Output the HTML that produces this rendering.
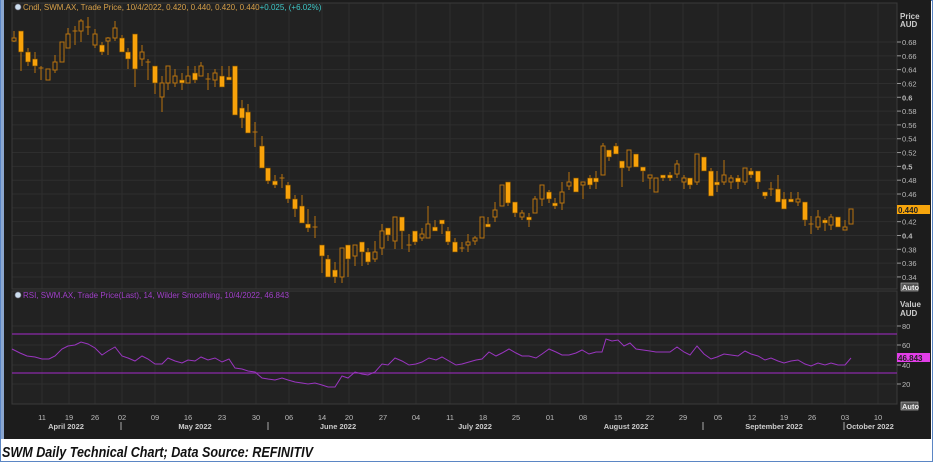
<!DOCTYPE html>
<html><head><meta charset="utf-8"><style>
html,body{margin:0;padding:0;background:#fff;}
body{width:933px;height:462px;overflow:hidden;position:relative;}
svg{position:absolute;left:0;top:0;}
text{font-family:"Liberation Sans",sans-serif;}
</style></head><body>
<svg id="s" width="933" height="462" viewBox="0 0 933 462" xmlns="http://www.w3.org/2000/svg">
<rect x="0" y="0" width="933" height="462" fill="#fff"/>
<rect x="0.5" y="0.5" width="932" height="461" fill="none" stroke="#5b86c4" stroke-width="1"/>
<rect x="1" y="0" width="3" height="439" fill="#8aa6cf"/>
<rect x="4" y="0" width="927" height="439" fill="#1c1c1c"/>
<rect x="12" y="3" width="885" height="286" fill="#222"/>
<rect x="12" y="291" width="885" height="113" fill="#222"/>
<g id="grid"></g>
<rect x="12" y="3" width="885" height="286" fill="none" stroke="#3a3a3a"/>
<rect x="12" y="291" width="885" height="113" fill="none" stroke="#3a3a3a"/>
<g id="c"></g>
<line x1="12" y1="334" x2="897" y2="334" stroke="#8a2aa8" stroke-width="1.3"/>
<line x1="12" y1="373" x2="897" y2="373" stroke="#8a2aa8" stroke-width="1.3"/>
<polyline id="rsi" fill="none" stroke="#9a35c0" stroke-width="1"/>
<g id="ax" font-size="7.5" fill="#bbb"></g>
<circle cx="18" cy="7" r="3" fill="#cde" stroke="#778" stroke-width="0.6"/>
<text x="23" y="10" font-size="8" fill="#d6a04a">Cndl, SWM.AX, Trade Price,  10/4/2022, 0.420, 0.440, 0.420, 0.440<tspan fill="#3fc9c9">+0.025, (+6.02%)</tspan></text>
<circle cx="18" cy="295" r="3" fill="#cde" stroke="#778" stroke-width="0.6"/>
<text x="23" y="298" font-size="8" fill="#a040c8">RSI, SWM.AX, Trade Price(Last),  14, Wilder Smoothing,  10/4/2022, 46.843</text>
<text x="900" y="19" font-size="8" fill="#ccc" font-weight="bold">Price</text>
<text x="900" y="27" font-size="8" fill="#ccc" font-weight="bold">AUD</text>
<text x="900" y="307" font-size="8" fill="#ccc" font-weight="bold">Value</text>
<text x="900" y="316" font-size="8" fill="#ccc" font-weight="bold">AUD</text>
<rect x="897" y="205" width="33" height="9" fill="#f7a50c"/>
<text x="898" y="213" font-size="8" fill="#222" font-weight="bold">0.440</text>
<rect x="897" y="353" width="33" height="9" fill="#e23ee8"/>
<text x="898" y="361" font-size="8" fill="#222" font-weight="bold">46.843</text>
<rect x="901" y="283" width="17" height="8" fill="#555" stroke="#bbb" stroke-width="0.6"/>
<text x="902" y="290" font-size="7.5" fill="#eee" font-weight="bold">Auto</text>
<rect x="901" y="402" width="17" height="8" fill="#555" stroke="#bbb" stroke-width="0.6"/>
<text x="902" y="409" font-size="7.5" fill="#eee" font-weight="bold">Auto</text>
<text x="2" y="457" font-size="14.5" font-weight="bold" font-style="italic" fill="#111" textLength="311" lengthAdjust="spacingAndGlyphs">SWM Daily Technical Chart; Data Source: REFINITIV</text>
</svg>
<script>
var NS="http://www.w3.org/2000/svg";
function el(p,t,a,txt){var e=document.createElementNS(NS,t);for(var k in a)e.setAttribute(k,a[k]);if(txt!=null)e.textContent=txt;p.appendChild(e);return e;}
var g=document.getElementById('grid'),ax=document.getElementById('ax'),c=document.getElementById('c');
function py(p){return 42+(0.68-p)/0.02*13.82;}
for(var i=0;i<=17;i++){var p=0.68-0.02*i,y=py(p);
 el(g,'line',{x1:12,x2:897,y1:y,y2:y,stroke:'#2e2e2e'});
 el(ax,'line',{x1:897,x2:901,y1:y,y2:y,stroke:'#999'});
 var s=p.toFixed(2);if(Math.abs(p-0.6)<1e-6)s='0.6';if(Math.abs(p-0.5)<1e-6)s='0.5';if(Math.abs(p-0.4)<1e-6)s='0.4';
 el(ax,'text',{x:902,y:y+3,'font-weight':(s.length==3?'bold':'normal')},s);}
[[80,326],[60,345],[40,365],[20,384]].forEach(function(v){el(g,'line',{x1:12,x2:897,y1:v[1],y2:v[1],stroke:'#2e2e2e'});
 el(ax,'line',{x1:897,x2:901,y1:v[1],y2:v[1],stroke:'#999'});el(ax,'text',{x:902,y:v[1]+3},v[0]);});
var ticks=[[42,'11'],[69,'19'],[95,'26'],[122,'02'],[155,'09'],[188,'16'],[222,'23'],[256,'30'],[289,'06'],[322,'14'],[349,'20'],[383,'27'],[416,'04'],[450,'11'],[483,'18'],[516,'25'],[550,'01'],[583,'08'],[618,'15'],[650,'22'],[683,'29'],[718,'05'],[752,'12'],[784,'19'],[812,'26'],[845,'03'],[878,'10']];
ticks.forEach(function(t){el(g,'line',{x1:t[0],x2:t[0],y1:3,y2:289,stroke:'#2e2e2e'});el(g,'line',{x1:t[0],x2:t[0],y1:291,y2:404,stroke:'#2e2e2e'});
 el(ax,'text',{x:t[0],y:420,'text-anchor':'middle'},t[1]);});
[[66,'April 2022'],[195,'May 2022'],[338,'June 2022'],[475,'July 2022'],[626,'August 2022'],[774,'September 2022'],[870,'October 2022']].forEach(function(m){
 el(ax,'text',{x:m[0],y:429,'text-anchor':'middle','font-weight':'bold',fill:'#ccc'},m[1]);});
[121,268,703,844].forEach(function(x){el(ax,'line',{x1:x,x2:x,y1:422,y2:430,stroke:'#aaa'});});
// candles: x, bodyTop, bodyBottom, wickTop, wickBottom, filled(1)/hollow(0)/doji(2)
var C=[[14,38,41,31,42,0],[21,31,52,31,71,1],[28,52,62,48,66,1],[35,59,66,52,73,1],[41,68,69,66,80,2],[48,69,80,69,80,0],[55,62,70,55,73,0],[62,42,62,42,62,0],[68,34,48,28,48,0],[75,31,32,26,45,2],[81,21,31,19,42,0],[88,27,28,17,35,2],[95,34,45,29,48,0],[102,45,52,42,55,1],[108,38,41,37,55,0],[115,28,38,21,41,0],[122,38,52,35,52,1],[128,52,59,48,69,1],[135,34,69,34,87,1],[142,52,59,45,66,0],[148,62,63,59,80,2],[155,66,83,66,94,1],[162,83,97,76,112,0],[168,66,83,66,90,0],[175,76,83,69,87,0],[182,80,83,73,90,1],[188,76,83,66,83,0],[195,73,80,66,83,1],[201,66,76,62,76,0],[208,79,80,73,90,2],[215,73,80,69,87,0],[222,76,87,66,87,1],[229,77,80,66,80,1],[235,66,115,66,115,1],[242,108,118,100,128,1],[248,112,133,104,133,1],[255,132,133,122,147,2],[262,146,168,136,168,1],[268,168,181,168,184,1],[275,181,185,175,188,1],[282,178,179,174,188,2],[288,185,199,182,203,1],[295,199,209,195,217,1],[302,206,223,195,223,1],[308,224,228,209,232,1],[315,227,228,216,238,2],
[322,245,256,245,273,1],[328,259,277,255,277,1],[335,270,277,262,283,1],[342,248,277,248,283,0],[348,245,259,245,277,1],[355,245,256,245,266,0],[362,242,252,242,266,1],[368,252,262,248,265,1],[375,252,259,241,262,0],[382,231,248,224,255,0],[388,228,235,228,241,1],[395,217,241,217,249,0],[402,217,231,217,249,1],[409,245,246,234,252,2],[415,231,242,231,245,1],[422,234,238,228,241,0],[428,224,238,206,238,0],[435,227,231,220,231,1],[442,220,224,220,234,1],[448,231,242,227,245,1],[455,242,252,238,252,1],[462,248,249,242,252,2],[468,242,245,234,252,0],[475,238,241,236,245,0],[482,217,238,217,238,0],[488,224,227,217,227,1],[495,210,217,202,222,0],[502,185,206,185,206,0],[508,182,203,182,206,1],[515,202,213,202,217,1],[522,213,217,210,220,0],[529,217,220,213,227,1],[535,199,213,196,213,0],[542,185,199,185,206,0],[549,192,199,190,203,1],[555,203,206,198,209,1],[562,192,203,182,210,0],[569,182,186,172,190,0],[576,178,192,178,192,1],[583,182,185,182,199,0],[590,178,185,175,189,1],[596,178,182,171,189,1],
[603,146,175,143,175,0],[609,150,157,150,161,1],[616,146,154,143,154,1],[622,161,168,161,187,1],[629,150,167,150,171,0],[636,154,167,154,167,1],[643,167,171,167,182,1],[650,175,178,175,189,0],[656,178,192,178,192,0],[663,175,178,175,181,1],[670,175,178,172,181,1],[677,164,174,160,178,0],[684,178,182,175,189,0],[690,178,185,178,189,1],[697,154,182,154,185,0],[704,157,171,157,171,1],[711,171,196,168,196,1],[717,182,185,171,192,1],[724,175,182,160,185,0],[731,178,182,175,189,0],[738,178,182,175,189,1],[745,168,182,168,185,0],[751,171,175,168,178,1],[758,171,182,171,189,1],[765,192,196,192,199,1],[771,189,190,182,196,2],[778,189,202,175,202,1],[784,199,209,192,209,1],[791,199,202,192,202,1],[798,199,202,192,206,0],[805,202,220,202,226,1],[811,224,225,216,234,2],[818,217,227,210,230,0],[825,220,223,218,231,1],[831,217,225,214,230,0],[838,217,227,217,227,1],[845,227,230,220,230,0],[851,209,224,209,224,0]];
C.forEach(function(d){var x=d[0];
 el(c,'line',{x1:x,x2:x,y1:d[3],y2:d[4],stroke:'#b8730f','stroke-width':1});
 if(d[5]==1)el(c,'rect',{x:x-2.5,y:d[1],width:5,height:Math.max(2,d[2]-d[1]),fill:'#f8a20a',stroke:'#6a4505','stroke-width':0.6});
 else if(d[5]==0)el(c,'rect',{x:x-2,y:d[1],width:4,height:Math.max(2,d[2]-d[1]),fill:'#222',stroke:'#b8730f','stroke-width':1});
 else el(c,'line',{x1:x-2.5,x2:x+2.5,y1:d[1],y2:d[1],stroke:'#b8730f','stroke-width':1});});
var R=[[12,349],[20,353],[27,356],[35,357],[42,359],[49,359],[55,356],[62,349],[68,346],[75,345],[81,342],[88,344],[95,348],[102,355],[108,351],[115,347],[122,356],[128,358],[135,361],[142,356],[148,359],[155,364],[162,364],[168,358],[175,361],[182,363],[188,360],[195,361],[201,357],[208,360],[215,358],[222,362],[229,359],[235,368],[242,369],[248,371],[255,372],[262,378],[268,379],[275,380],[282,378],[288,380],[295,382],[302,383],[308,384],[315,383],[322,385],[328,387],[335,387],[342,376],[348,378],[355,372],[362,374],[368,375],[375,372],[382,364],[388,365],[395,358],[402,361],[409,365],[416,364],[422,362],[429,358],[436,360],[442,357],[449,361],[456,365],[462,364],[469,362],[476,360],[482,359],[489,352],[496,356],[502,353],[509,349],[516,353],[522,356],[529,356],[536,358],[542,354],[549,349],[556,352],[562,355],[569,355],[576,353],[582,350],[589,354],[596,352],[602,352],[606,339],[612,341],[618,340],[624,346],[630,343],[636,349],[643,350],[650,351],[656,352],[663,352],[670,352],[677,347],[684,352],[690,355],[697,346],[704,354],[711,359],[717,357],[724,354],[731,355],[738,356],[745,351],[751,354],[758,356],[765,360],[771,358],[778,361],[784,363],[791,361],[798,360],[805,364],[811,366],[818,363],[825,365],[831,363],[838,365],[845,365],[851,358]];
document.getElementById('rsi').setAttribute('points',R.map(function(p){return p.join(',');}).join(' '));
</script>
</body></html>
